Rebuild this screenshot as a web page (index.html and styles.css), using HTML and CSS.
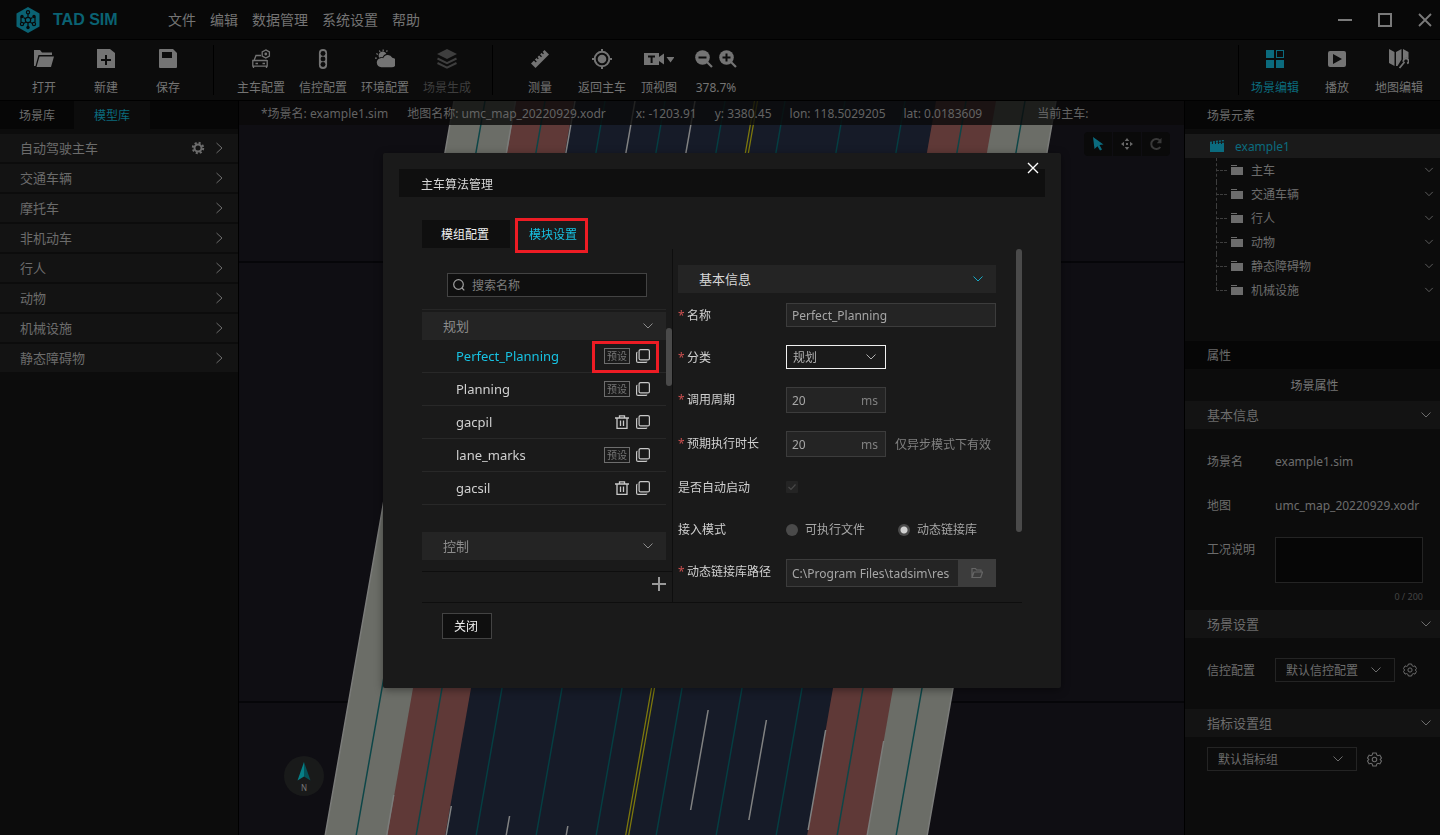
FILE: index.html
```html
<!DOCTYPE html>
<html lang="zh-CN">
<head>
<meta charset="utf-8">
<title>TAD SIM</title>
<link rel="stylesheet" href="styles.css">
</head>
<body>
<svg class="sprite" aria-hidden="true">
  <symbol id="chev-down" viewBox="0 0 12 12"><path d="M1.500 3.500L6 8l4.500-4.500" fill="none" stroke="currentColor"/></symbol>
  <symbol id="chev-right" viewBox="0 0 12 12"><path d="M3.500 1L9 6l-5.500 5" fill="none" stroke="currentColor"/></symbol>
  <symbol id="close" viewBox="0 0 12 12"><path d="M1 1l10 10M11 1L1 11" fill="none" stroke="currentColor" stroke-width="1.400"/></symbol>
  <symbol id="copy" viewBox="0 0 16 16"><g fill="none" stroke="currentColor" stroke-width="1.200"><rect x="4.100" y="1.600" width="10.300" height="10.300" rx="1.500"/><path d="M2.400 4.200Q1.600 4.400 1.600 5.500v7.400q0 1.500 1.500 1.500h7.600q1 0 1.200-.8"/></g></symbol>
  <symbol id="trash" viewBox="0 0 16 16"><path d="M1 4h14M5.500 4V1.800h5V4M3 4v10.400h10V4M6.500 6.500v5.500M9.500 6.500v5.500" fill="none" stroke="currentColor" stroke-width="1.300"/></symbol>
  <symbol id="folder" viewBox="0 0 12 10"><path d="M0 0h6v1H0zM0 2h12v8H0z" fill="currentColor"/></symbol>
  <symbol id="cog" viewBox="0 0 14 14"><g fill="none" stroke="currentColor"><path d="M5.400 1h3.200l.5 1.700 1.200.7 1.700-.5 1.500 2.700-1.200 1.400 1.200 1.400L12 11.100l-1.700-.5-1.200.7-.5 1.700H5.400l-.5-1.700-1.200-.7-1.700.5L.5 8.400 1.700 7 .5 5.600 2 2.900l1.700.5 1.200-.7z"/><circle cx="7" cy="7" r="2.100"/></g></symbol>
</svg>

<div class="app">
  <header class="titlebar">
    <svg class="logo" viewBox="0 0 24 26">
      <path d="M12 0l11.500 6.500v13L12 26 .5 19.500v-13z" fill="#0a6273"/>
      <g stroke="#08090a" stroke-width="1.200" fill="none"><path d="M12 7v3M7.500 10.500l2 1.200M16.500 10.500l-2 1.200M7.500 16.500l2.200-1.300M16.500 16.500l-2.200-1.300M12 16v3M5 10v5M19 10v5"/><circle cx="12" cy="13" r="2.700"/><circle cx="12" cy="5.300" r="1.600"/><circle cx="6" cy="17" r="1.600"/><circle cx="18" cy="17" r="1.600"/></g>
      <g fill="#08090a"><circle cx="6" cy="9.500" r="1.700"/><circle cx="18" cy="9.500" r="1.700"/><circle cx="12" cy="20.500" r="1.700"/></g>
    </svg>
    <h1 class="brand">TAD SIM</h1>
    <nav class="menu">
      <button>文件</button><button>编辑</button><button>数据管理</button><button>系统设置</button><button>帮助</button>
    </nav>
    <div class="window-controls">
      <button aria-label="最小化"><svg viewBox="0 0 14 14"><path d="M0 7h14" stroke="currentColor" stroke-width="2"/></svg></button>
      <button aria-label="最大化"><svg viewBox="0 0 14 14"><rect x="1" y="1" width="12" height="12" fill="none" stroke="currentColor" stroke-width="2"/></svg></button>
      <button aria-label="退出"><svg viewBox="0 0 14 14"><path d="M1 1l12 12M13 1L1 13" stroke="currentColor" stroke-width="1.800"/></svg></button>
    </div>
  </header>

  <div class="toolbar">
    <button class="tool"><svg viewBox="0 0 20 20"><path d="M0 1h6l2 2.500h10V6H4.500L1.500 17H0zM5.500 7.500H20L17 18H2.500z" fill="currentColor"/></svg>打开</button>
    <button class="tool"><svg viewBox="0 0 20 20"><path d="M1 0h13l5 4v15H1zM9 6v4H5v2h4v4h2v-4h4v-2h-4V6z" fill="currentColor" fill-rule="evenodd"/></svg>新建</button>
    <button class="tool"><svg viewBox="0 0 20 20"><path d="M1 1q0-1 1-1h13l4 4v14q0 1-1 1H2q-1 0-1-1zM4 3v6h10V3z" fill="currentColor" fill-rule="evenodd"/></svg>保存</button>
    <span class="divider"></span>
    <button class="tool"><svg viewBox="0 0 20 20"><g fill="none" stroke="currentColor" stroke-width="1.300"><path d="M10 6.500H5L3 11.500h13M3 11.500H1.800v5.700h14.400V11M2.500 17v2M15.500 17v2M4.500 14.500h2.500M11.500 14.500H14"/><path d="M14.800.9l3.600 2v4.100l-3.600 2-3.600-2V2.900z"/></g><circle cx="14.800" cy="5" r="1.400" fill="currentColor"/></svg>主车配置</button>
    <button class="tool"><svg viewBox="0 0 20 22"><rect x="5.500" y="0" width="9" height="22" rx="4.500" fill="currentColor"/><g fill="#0c0c0c"><circle cx="10" cy="5" r="2.700"/><circle cx="10" cy="11" r="2.700"/><circle cx="10" cy="17" r="2.700"/></g></svg>信控配置</button>
    <button class="tool"><svg viewBox="0 0 22 20"><path d="M7 19a5 5 0 0 1-1-9.900q1.500-.8 3 .2A5.500 5.500 0 0 1 19 8.500a5.300 5.300 0 0 1-.5 10.500z" fill="currentColor"/><path d="M4.500 8.500A4.500 4.500 0 0 1 12.500 4.200Q9.500 5 8.300 8 6.500 7.300 4.500 8.500z" fill="currentColor"/><path d="M0 9h2M1.500 4l1.700 1M4.800.6l.9 1.800M9 -.5v2M13.500.5l-.8 1.600" stroke="currentColor" stroke-width="1.300"/></svg>环境配置</button>
    <button class="tool tool-off" disabled><svg viewBox="0 0 20 20"><path d="M10 0l10 5-10 5L0 5z" fill="currentColor"/><path d="M.5 9.500L10 14.200l9.500-4.700M.5 14L10 18.700 19.500 14" fill="none" stroke="currentColor" stroke-width="2"/></svg>场景生成</button>
    <span class="divider"></span>
    <button class="tool"><svg viewBox="0 0 20 20"><path d="M1 14.500L14.500 1 19 5.500 5.500 19z" fill="currentColor"/><path d="M3.800 10.500l2.500 2.500M6.500 8l1.800 1.800M9 5.300l2.500 2.500M11.700 3l1.800 1.800" stroke="#0c0c0c" stroke-width="1.300"/></svg>测量</button>
    <button class="tool"><svg viewBox="0 0 20 20"><g fill="none" stroke="currentColor" stroke-width="2"><circle cx="10" cy="10" r="7.300"/><path d="M10 0v3M10 17v3M0 10h3M17 10h3"/></g><circle cx="10" cy="10" r="4.300" fill="currentColor"/></svg>返回主车</button>
    <button class="tool tool-view"><svg viewBox="0 0 30 20"><path d="M0 4h15v4l5-3.500v11L15 12v4H0zM4 6.500v2h2.600V14h2V8.500H11v-2zM22.500 8h8l-4 5.500z" fill="currentColor" fill-rule="evenodd"/></svg>顶视图</button>
    <div class="tool zoom">
      <span class="zoom-icons">
        <button aria-label="缩小"><svg viewBox="0 0 18 18"><path d="M12 12l5 5" stroke="currentColor" stroke-width="2.200"/><circle cx="7.500" cy="7.500" r="7.300" fill="currentColor"/><path d="M3.500 7.500h8" stroke="#0c0c0c" stroke-width="2"/></svg></button>
        <button aria-label="放大"><svg viewBox="0 0 18 18"><path d="M12 12l5 5" stroke="currentColor" stroke-width="2.200"/><circle cx="7.500" cy="7.500" r="7.300" fill="currentColor"/><path d="M3.500 7.500h8M7.500 3.500v8" stroke="#0c0c0c" stroke-width="2"/></svg></button>
      </span>
      <output>378.7%</output>
    </div>
    <span class="divider divider-right"></span>
    <button class="tool tool-on"><svg viewBox="0 0 20 20"><path d="M1 1h8v8H1zM1 11h8v8H1zM11 11h8v8h-8z" fill="currentColor"/><rect x="11.500" y="1.500" width="7" height="7" fill="none" stroke="currentColor"/></svg>场景编辑</button>
    <button class="tool"><svg viewBox="0 0 20 20"><path d="M3 2h14q2 0 2 2v12q0 2-2 2H3q-2 0-2-2V4q0-2 2-2zM6 5v10l9-5z" fill="currentColor" fill-rule="evenodd"/></svg>播放</button>
    <button class="tool"><svg viewBox="0 0 20 20"><path d="M0 0l5.500 3v14L0 14zM7 3l5.500-3v10.500L8.500 17 7 17zM14 0l5.500 3v6.500q-3-2-5.500 1z" fill="currentColor"/><path d="M10.500 19l5-6M14.500 12.800a2.600 2.600 0 1 1 3.600 1.700" fill="none" stroke="currentColor" stroke-width="1.800"/></svg>地图编辑</button>
  </div>

  <div class="workspace">
    <aside class="library">
      <div class="lib-tabs"><button>场景库</button><button class="on">模型库</button></div>
      <ul class="lib-list">
        <li><span>自动驾驶主车</span><svg class="gear" viewBox="0 0 14 14"><g fill="none" stroke="currentColor"><circle cx="7" cy="7" r="3.500" stroke-width="2"/><circle cx="7" cy="7" r="5.200" stroke-width="2" stroke-dasharray="2.100 1.984"/></g></svg><svg class="arrow"><use href="#chev-right"/></svg></li>
        <li><span>交通车辆</span><svg class="arrow"><use href="#chev-right"/></svg></li>
        <li><span>摩托车</span><svg class="arrow"><use href="#chev-right"/></svg></li>
        <li><span>非机动车</span><svg class="arrow"><use href="#chev-right"/></svg></li>
        <li><span>行人</span><svg class="arrow"><use href="#chev-right"/></svg></li>
        <li><span>动物</span><svg class="arrow"><use href="#chev-right"/></svg></li>
        <li><span>机械设施</span><svg class="arrow"><use href="#chev-right"/></svg></li>
        <li><span>静态障碍物</span><svg class="arrow"><use href="#chev-right"/></svg></li>
      </ul>
    </aside>

    <main class="map">
      <svg class="road" aria-hidden="true">
        <path d="M0 161h2000M0 601h2000" stroke="#060609" stroke-width="2"/>
        <g transform="skewX(-9.950)">
          <rect x="215" width="602" height="1200" fill="#6b6d67"/>
          <rect x="277" width="480" height="1200" fill="#5f3937"/>
          <rect x="335" width="362" height="1200" fill="#161b28"/>
          <path d="M215 0v1200M817 0v1200M276.500 0v100M276.500 694v500M757 640v500" stroke="#7b7c7a" stroke-width="1.500" fill="none"/>
          <path d="M336 0v100M396 0v100M456 0v100M336 705v90M396 715v90M456 725v90M576 609v100M636 619v100M697 629v100" stroke="#818282" stroke-width="1.500" fill="none"/>
          <path d="M246 0v1200M306 0v1200M727 0v1200M786 0v1200" stroke="#0d4648" stroke-width="1.500"/>
          <path d="M366 0v1200M426 0v1200M486 0v1200M546 0v1200M606 0v1200M666 0v1200" stroke="#053e42" stroke-width="1.500"/>
          <path d="M515.500 0v1200M518.500 0v1200" stroke="#7d780c" stroke-width="1.300"/>
        </g>
      </svg>
      <div class="status">
        <span>*场景名: example1.sim</span><span class="st-map">地图名称: umc_map_20220929.xodr</span><span class="st-x">x: -1203.91</span><span>y: 3380.45</span><span>lon: 118.5029205</span><span>lat: 0.0183609</span><span class="st-car">当前主车:</span>
      </div>
      <div class="map-tools">
        <button class="on" aria-label="选择"><svg viewBox="0 0 14 14"><path d="M2 0l10.500 7.500-4 .6 2.500 4.400-2 1.100-2.500-4.400L3.500 12z" fill="currentColor"/></svg></button>
        <button aria-label="平移"><svg viewBox="0 0 14 14"><path d="M7 1l2.300 3H4.700zM7 13L4.700 10h4.600zM1 7l3-2.300v4.600zM13 7l-3 2.300V4.700zM6 6h2v2H6z" fill="currentColor"/></svg></button>
        <button class="off" aria-label="旋转"><svg viewBox="0 0 14 14"><path d="M11.300 10A5 5 0 1 1 11 3.700" fill="none" stroke="currentColor" stroke-width="2"/><path d="M12.500.8v5.400H7.800z" fill="currentColor"/></svg></button>
      </div>
      <div class="compass"><svg viewBox="0 0 14 19"><path d="M7 0L.5 18.500 7 14.500z" fill="#067f86"/><path d="M7 0l6.500 18.500L7 14.500z" fill="#055258"/></svg><span>N</span></div>
    </main>

    <aside class="inspector">
      <h2 class="panel-title">场景元素</h2>
      <div class="tree">
        <div class="tree-root"><svg viewBox="0 0 14 12"><path d="M0 4h14v8H0z" fill="currentColor"/><path d="M0 2.500l14-2M0 3.500h14" stroke="currentColor" stroke-width="1.600" stroke-dasharray="2 1"/></svg><span>example1</span></div>
        <ul>
          <li><svg class="dir"><use href="#folder"/></svg><span>主车</span><svg class="fold"><use href="#chev-down"/></svg></li>
          <li><svg class="dir"><use href="#folder"/></svg><span>交通车辆</span><svg class="fold"><use href="#chev-down"/></svg></li>
          <li><svg class="dir"><use href="#folder"/></svg><span>行人</span><svg class="fold"><use href="#chev-down"/></svg></li>
          <li><svg class="dir"><use href="#folder"/></svg><span>动物</span><svg class="fold"><use href="#chev-down"/></svg></li>
          <li><svg class="dir"><use href="#folder"/></svg><span>静态障碍物</span><svg class="fold"><use href="#chev-down"/></svg></li>
          <li><svg class="dir"><use href="#folder"/></svg><span>机械设施</span><svg class="fold"><use href="#chev-down"/></svg></li>
        </ul>
      </div>
      <h2 class="panel-title">属性</h2>
      <h3 class="prop-title">场景属性</h3>
      <h4 class="group">基本信息<svg><use href="#chev-down"/></svg></h4>
      <div class="props">
        <div class="prop"><span class="prop-label">场景名</span><span>example1.sim</span></div>
        <div class="prop"><span class="prop-label">地图</span><span>umc_map_20220929.xodr</span></div>
        <div class="prop"><label class="prop-label" for="desc">工况说明</label><textarea id="desc"></textarea></div>
        <div class="counter">0 / 200</div>
      </div>
      <h4 class="group">场景设置<svg><use href="#chev-down"/></svg></h4>
      <div class="prop prop-signal">
        <label class="prop-label" for="signal">信控配置</label>
        <span class="select"><select id="signal"><option>默认信控配置</option></select><svg><use href="#chev-down"/></svg></span>
        <button class="cog" aria-label="信控设置"><svg><use href="#cog"/></svg></button>
      </div>
      <h4 class="group">指标设置组<svg><use href="#chev-down"/></svg></h4>
      <div class="prop prop-metric">
        <span class="select select-wide"><select aria-label="指标设置组"><option>默认指标组</option></select><svg><use href="#chev-down"/></svg></span>
        <button class="cog cog-metric" aria-label="指标设置"><svg><use href="#cog"/></svg></button>
      </div>
    </aside>
  </div>
</div>

<div class="backdrop">
  <section class="dialog" role="dialog" aria-labelledby="dlg-title">
    <button class="dialog-close" aria-label="关闭窗口"><svg><use href="#close"/></svg></button>
    <h2 class="dialog-title" id="dlg-title">主车算法管理</h2>
    <div class="dialog-tabs">
      <button>模组配置</button>
      <button class="on">模块设置<span class="mark mark-tab"></span></button>
    </div>
    <div class="dialog-body">
      <div class="modules">
        <label class="search"><svg viewBox="0 0 14 14"><circle cx="6.500" cy="6.500" r="4.800" fill="none" stroke="currentColor" stroke-width="1.200"/><path d="M10 10l2.300 2.300" stroke="currentColor" stroke-width="1.200"/></svg><input type="text" placeholder="搜索名称" aria-label="搜索名称"></label>
        <div class="module-list">
          <h3 class="section">规划<svg><use href="#chev-down"/></svg></h3>
          <ul>
            <li class="on"><span class="name">Perfect_Planning</span><span class="tag">预设</span><button aria-label="复制"><svg><use href="#copy"/></svg></button><span class="mark mark-row"></span></li>
            <li><span class="name">Planning</span><span class="tag">预设</span><button aria-label="复制"><svg><use href="#copy"/></svg></button></li>
            <li><span class="name">gacpil</span><button aria-label="删除"><svg><use href="#trash"/></svg></button><button aria-label="复制"><svg><use href="#copy"/></svg></button></li>
            <li><span class="name">lane_marks</span><span class="tag">预设</span><button aria-label="复制"><svg><use href="#copy"/></svg></button></li>
            <li><span class="name">gacsil</span><button aria-label="删除"><svg><use href="#trash"/></svg></button><button aria-label="复制"><svg><use href="#copy"/></svg></button></li>
          </ul>
          <h3 class="section">控制<svg><use href="#chev-down"/></svg></h3>
        </div>
        <div class="module-add"><button aria-label="新增"><svg viewBox="0 0 14 14"><path d="M7 0v14M0 7h14" stroke="currentColor" stroke-width="2"/></svg></button></div>
        <span class="thumb thumb-list"></span>
      </div>
      <form class="detail">
        <h3 class="section section-on">基本信息<svg><use href="#chev-down"/></svg></h3>
        <div class="row"><label class="req" for="name">名称</label><input class="field" id="name" type="text" value="Perfect_Planning"></div>
        <div class="row"><label class="req" for="kind">分类</label><span class="select select-form"><select id="kind"><option>规划</option></select><svg><use href="#chev-down"/></svg></span></div>
        <div class="row"><label class="req" for="cycle">调用周期</label><span class="unit"><input id="cycle" type="text" value="20"><span>ms</span></span></div>
        <div class="row"><label class="req" for="expect">预期执行时长</label><span class="unit"><input id="expect" type="text" value="20"><span>ms</span></span><span class="hint">仅异步模式下有效</span></div>
        <div class="row"><label for="auto">是否自动启动</label><span class="check"><input id="auto" type="checkbox" checked disabled><svg viewBox="0 0 12 12"><path d="M2.500 6l2.500 2.500L9.500 3.500" fill="none" stroke="currentColor" stroke-width="1.200"/></svg></span></div>
        <div class="row"><span class="row-label">接入模式</span><label class="radio"><input type="radio" name="mode">可执行文件</label><label class="radio"><input type="radio" name="mode" checked>动态链接库</label></div>
        <div class="row"><label class="req" for="path">动态链接库路径</label><span class="path"><input id="path" type="text" value="C:\Program Files\tadsim\resources"><button type="button" aria-label="浏览"><svg viewBox="0 0 12 12"><path d="M1 10.500v-9h3.500l1 1.500H10v2M1 10.500L3 5h8.500l-1.800 5.500z" fill="none" stroke="currentColor" stroke-width="1.200"/></svg></button></span></div>
        <span class="thumb thumb-form"></span>
      </form>
    </div>
    <footer class="dialog-foot"><button>关闭</button></footer>
  </section>
</div>
</body>
</html>
```
FILE: styles.css
```css
* { box-sizing: border-box; }
body, h1, h2, h3, h4, ul { margin: 0; padding: 0; }
ul { list-style: none; }
h2, h3, h4 { font-weight: 400; font-size: 12px; }
body, button, input, select, textarea {
  font-family: "Noto Sans", "Noto Sans CJK SC", sans-serif;
  font-size: 12px;
  line-height: 18px;
}
body { background: #0c0c0c; color: #6c6c6c; }
button { margin: 0; padding: 0; border: 0; background: none; color: inherit; }
svg { display: block; flex: none; width: 12px; height: 12px; }
.sprite { position: absolute; width: 0; height: 0; }

.app { display: flex; flex-direction: column; height: 100vh; overflow: hidden; }

/* title bar */
.titlebar { display: flex; align-items: center; height: 40px; padding: 0 8px 0 16px; background: #080808; border-bottom: 1px solid #000; }
.logo { width: 24px; height: 26px; }
.brand { margin-left: 13px; width: 66px; font: bold 16px/24px "Liberation Sans", Arial, sans-serif; color: #0a6273; white-space: nowrap; }
.menu { display: flex; gap: 14px; margin-left: 49px; color: #747474; }
.menu button { font-size: 14px; line-height: 20px; }
.window-controls { display: flex; gap: 26px; margin-left: auto; color: #7a7a7a; }
.window-controls svg { width: 14px; height: 14px; }

/* toolbar */
.toolbar { display: flex; height: 61px; padding: 0 10px 0 13px; border-bottom: 1px solid #000; background: #0c0c0c; }
.tool { display: flex; flex-direction: column; align-items: center; width: 62px; padding-top: 9px; gap: 10px; color: #747474; white-space: nowrap; }
.tool svg { width: 20px; height: 20px; }
.tool-off { color: #3e3e3e; }
.tool-on { color: #0b6b7e; }
.tool-view { width: 52px; }
.tool-view svg { width: 30px; }
.zoom-icons { display: flex; gap: 6px; height: 20px; align-items: center; }
.zoom-icons svg { width: 18px; height: 18px; }
.divider { width: 1px; margin: 5px 16px 5px 14px; background: #000; }
.divider-right { margin: 5px 5px 5px auto; }

.workspace { display: flex; flex: 1; min-height: 0; }

/* model library */
.library { flex: none; width: 239px; border-right: 1px solid #000; }
.lib-tabs { display: flex; height: 28px; background: #060606; }
.lib-tabs button { width: 74px; padding-top: 2px; }
.lib-tabs .on { width: 76px; background: #0c0c0c; color: #0b6b7e; }
.lib-list { display: flex; flex-direction: column; gap: 2px; padding-top: 5px; }
.lib-list li { display: flex; align-items: center; height: 28px; padding: 0 13px 0 20px; background: #131313; font-size: 13px; }
.lib-list .gear { width: 14px; height: 14px; margin-left: auto; margin-right: 8px; }
.lib-list .arrow { margin-left: auto; }
.lib-list .gear + .arrow { margin-left: 0; }

/* map view */
.map { position: relative; flex: 1; min-width: 0; background: #0f0e13; overflow: hidden; }
.road { position: absolute; inset: 0; width: 100%; height: 100%; }
.status { position: relative; display: flex; gap: 18px; height: 24px; padding-left: 22px; line-height: 26px; background: rgba(10, 10, 10, .8); color: #636363; white-space: nowrap; }
.st-map { margin-left: 1px; }
.st-x { margin-left: 12px; }
.st-car { margin-left: 37px; }
.map-tools { position: absolute; top: 31px; right: 14px; display: flex; gap: 1px; border-radius: 4px; overflow: hidden; }
.map-tools button { display: grid; place-items: center; width: 28px; height: 24px; background: #0a0a0a; color: #666; }
.map-tools svg { width: 14px; height: 14px; }
.map-tools .on { color: #0b6b7e; }
.map-tools .off { color: #393939; }
.compass { position: absolute; left: 45px; bottom: 39px; display: flex; flex-direction: column; align-items: center; width: 40px; height: 40px; padding-top: 6px; border-radius: 50%; background: #191a1a; }
.compass svg { width: 14px; height: 19px; }
.compass span { font-size: 8px; line-height: 14px; color: #777; }

/* inspector */
.inspector { flex: none; width: 256px; border-left: 1px solid #000; }
.panel-title { height: 28px; padding-left: 22px; line-height: 30px; background: #060606; }
.tree { padding-top: 5px; height: 212px; }
.tree-root { display: flex; align-items: center; gap: 11px; height: 24px; padding-left: 25px; background: #1a1a1a; color: #0b6b7e; }
.tree-root svg { width: 14px; height: 12px; }
.tree span { padding-top: 2px; }
.tree ul { padding-left: 31px; }
.tree li { position: relative; display: flex; align-items: center; height: 24px; padding-right: 6px; }
.tree li::before { content: ""; width: 11px; margin-right: 4px; border-top: 1px dashed #3e3e3e; }
.tree li::after { content: ""; position: absolute; left: 0; top: 0; height: 24px; border-left: 1px dashed #3e3e3e; }
.tree li:last-child::after { height: 12px; }
.dir { height: 10px; margin-right: 8px; }
.fold { width: 10px; height: 10px; margin-left: auto; }
.prop-title { height: 32px; line-height: 34px; padding-left: 4px; text-align: center; color: #777; }
.group { display: flex; align-items: center; justify-content: space-between; height: 28px; padding: 0 8px 0 22px; background: #131313; font-size: 13px; }
.props { padding: 20px 17px 1px 0; }
.prop { display: flex; min-height: 44px; padding-left: 22px; line-height: 26px; }
.prop-label { flex: none; width: 68px; }
.props textarea { flex: 1; min-width: 0; height: 46px; border: 1px solid #242424; background: #060606; color: inherit; resize: none; }
.props .prop:nth-child(3) { height: 48px; }
.counter { line-height: 24px; font-size: 9px; text-align: right; color: #444; }
.select { position: relative; display: block; width: 120px; height: 24px; }
.select select { width: 100%; height: 100%; padding: 2px 10px 0; border: 1px solid #242424; border-radius: 0; background: transparent; color: inherit; appearance: none; }
.select svg { position: absolute; right: 13px; top: 6px; pointer-events: none; }
.select-wide { width: 150px; }
.prop-signal { padding-top: 20px; height: 71px; }
.prop-metric { padding-top: 10px; }
.cog { height: 24px; margin-left: 8px; }
.cog svg { width: 14px; height: 14px; }
.cog-metric { margin-left: 10px; }
.cog-metric svg { width: 15px; height: 15px; }

/* dialog */
.backdrop { position: fixed; inset: 0; display: flex; justify-content: center; align-items: flex-start; padding: 153px 0 0 4px; }
.dialog { position: relative; width: 678px; max-width: 100%; padding: 16px 16px 49px; border-radius: 2px; background: #1a1a1a; color: #d0d0d0; box-shadow: 0 2px 8px rgba(0, 0, 0, .4); }
.dialog-close { position: absolute; top: 9px; right: 22px; color: #fff; }
.dialog-title { height: 28px; padding-left: 22px; line-height: 32px; background: #0f0f0f; color: #d8d8d8; }
.dialog-tabs { display: flex; margin: 23px 0 0 23px; }
.dialog-tabs button { position: relative; width: 88px; height: 28px; padding: 2px 2px 0 0; background: #0f0f0f; color: #f0f0f0; }
.dialog-tabs .on { background: none; color: #17c2e2; }
.mark { position: absolute; border: 3px solid #ed1c24; pointer-events: none; }
.mark-tab { left: 5px; right: 10px; top: -2px; bottom: -5px; }
.mark-row { right: 7px; width: 67px; top: 1px; height: 32px; }
.dialog-body { display: flex; margin: 1px 23px 0; border-bottom: 1px solid #0e0e0e; }
.modules { position: relative; display: flex; flex-direction: column; width: 251px; border-right: 1px solid #0e0e0e; }
.search { display: flex; align-items: center; gap: 6px; width: 200px; height: 24px; margin: 24px 0 12px 25px; padding: 0 4px; border: 1px solid #434343; background: #0f0f0f; color: #a0a0a0; }
.search svg { width: 14px; height: 14px; }
.search input { flex: 1; min-width: 0; padding: 2px 0 0; border: 0; outline: 0; background: none; color: inherit; }
.search input::placeholder { color: #7d7d7d; opacity: 1; }
.module-list { width: 244px; border-top: 1px solid #262626; padding-top: 2px; }
.section { display: flex; align-items: center; justify-content: space-between; height: 28px; padding: 0 12px 0 21px; background: #242424; color: #8c8c8c; font-size: 13px; }
.module-list ul { margin-bottom: 27px; }
.module-list li { position: relative; display: flex; align-items: center; gap: 5px; height: 33px; padding: 0 15px 0 34px; border-bottom: 1px solid #282828; font-size: 13px; }
.module-list .on { color: #17c2e2; }
.module-list button { color: #c8c8c8; }
.module-list button svg { width: 16px; height: 16px; }
.name { margin-right: auto; }
.tag { width: 26px; height: 16px; border: 1px solid #6d6d6d; font-size: 10px; line-height: 14px; text-align: center; color: #777; }
.module-add { display: flex; justify-content: flex-end; align-items: flex-start; height: 31px; margin-top: 11px; padding: 5px 6px 0 0; border-top: 1px solid #0e0e0e; color: #999; }
.module-add svg { width: 14px; height: 14px; }
.thumb { position: absolute; width: 6px; border-radius: 3px; background: #4a4a4a; }
.thumb-list { right: 0; top: 79px; height: 58px; }
.thumb-form { right: 0; top: 0; height: 283px; }
.detail { position: relative; display: flex; flex: 1; min-width: 0; flex-direction: column; gap: 18px; padding: 16px 26px 15px 5px; }
.section-on { margin-bottom: -8px; color: #d8d8d8; }
.section-on svg { color: #17a8c4; }
.row { display: flex; min-height: 24px; }
.row > label:first-child, .row-label { flex: none; width: 108px; height: 24px; line-height: 26px; white-space: nowrap; }
.row > .req::before { content: "*"; display: inline-block; width: 9px; color: #c94f4f; }
.field, .unit, .path { border: 1px solid #3c3c3c; background: #242424; color: #a6a6a6; }
.field { flex: 1; min-width: 0; height: 24px; padding: 0 5px; outline: 0; }
.select-form { width: 100px; color: #b0b0b0; }
.select-form select { padding: 2px 6px 0; border-color: #f0f0f0; }
.select-form svg { right: 9px; }
.unit { display: flex; align-items: center; width: 100px; height: 26px; padding: 2px 7px 0 5px; }
.unit input, .path input { flex: 1; min-width: 0; padding: 0; border: 0; outline: 0; background: none; color: inherit; }
.unit span { color: #808080; }
.hint { height: 26px; margin-left: 9px; line-height: 28px; color: #808080; white-space: nowrap; }
.check { position: relative; display: flex; align-items: center; width: 12px; color: #484848; }
.check input { width: 12px; height: 12px; margin: 0; border-radius: 1px; background: #242424; appearance: none; }
.check svg { position: absolute; inset: 6px 0 0; }
.radio { display: flex; align-items: center; gap: 7px; width: 112px; height: 24px; padding-top: 2px; color: #a6a6a6; white-space: nowrap; }
.radio:last-child { width: auto; }
.radio input { width: 12px; height: 12px; margin: 0; border-radius: 50%; background: #4a4a4a; appearance: none; }
.radio input:checked { background: radial-gradient(circle, #d0d0d0 0 3px, #4a4a4a 4px); }
.path { display: flex; flex: 1; min-width: 0; height: 28px; padding-left: 5px; }
.path input { padding-top: 2px; }
.path button { display: grid; place-items: center; width: 37px; margin-left: 8px; background: #3c3c3c; color: #666; }
.dialog-foot { padding: 10px 0 0 43px; }
.dialog-foot button { display: block; width: 50px; height: 26px; padding: 2px 2px 0 0; border: 1px solid #434343; background: #0f0f0f; color: #f0f0f0; }
```
